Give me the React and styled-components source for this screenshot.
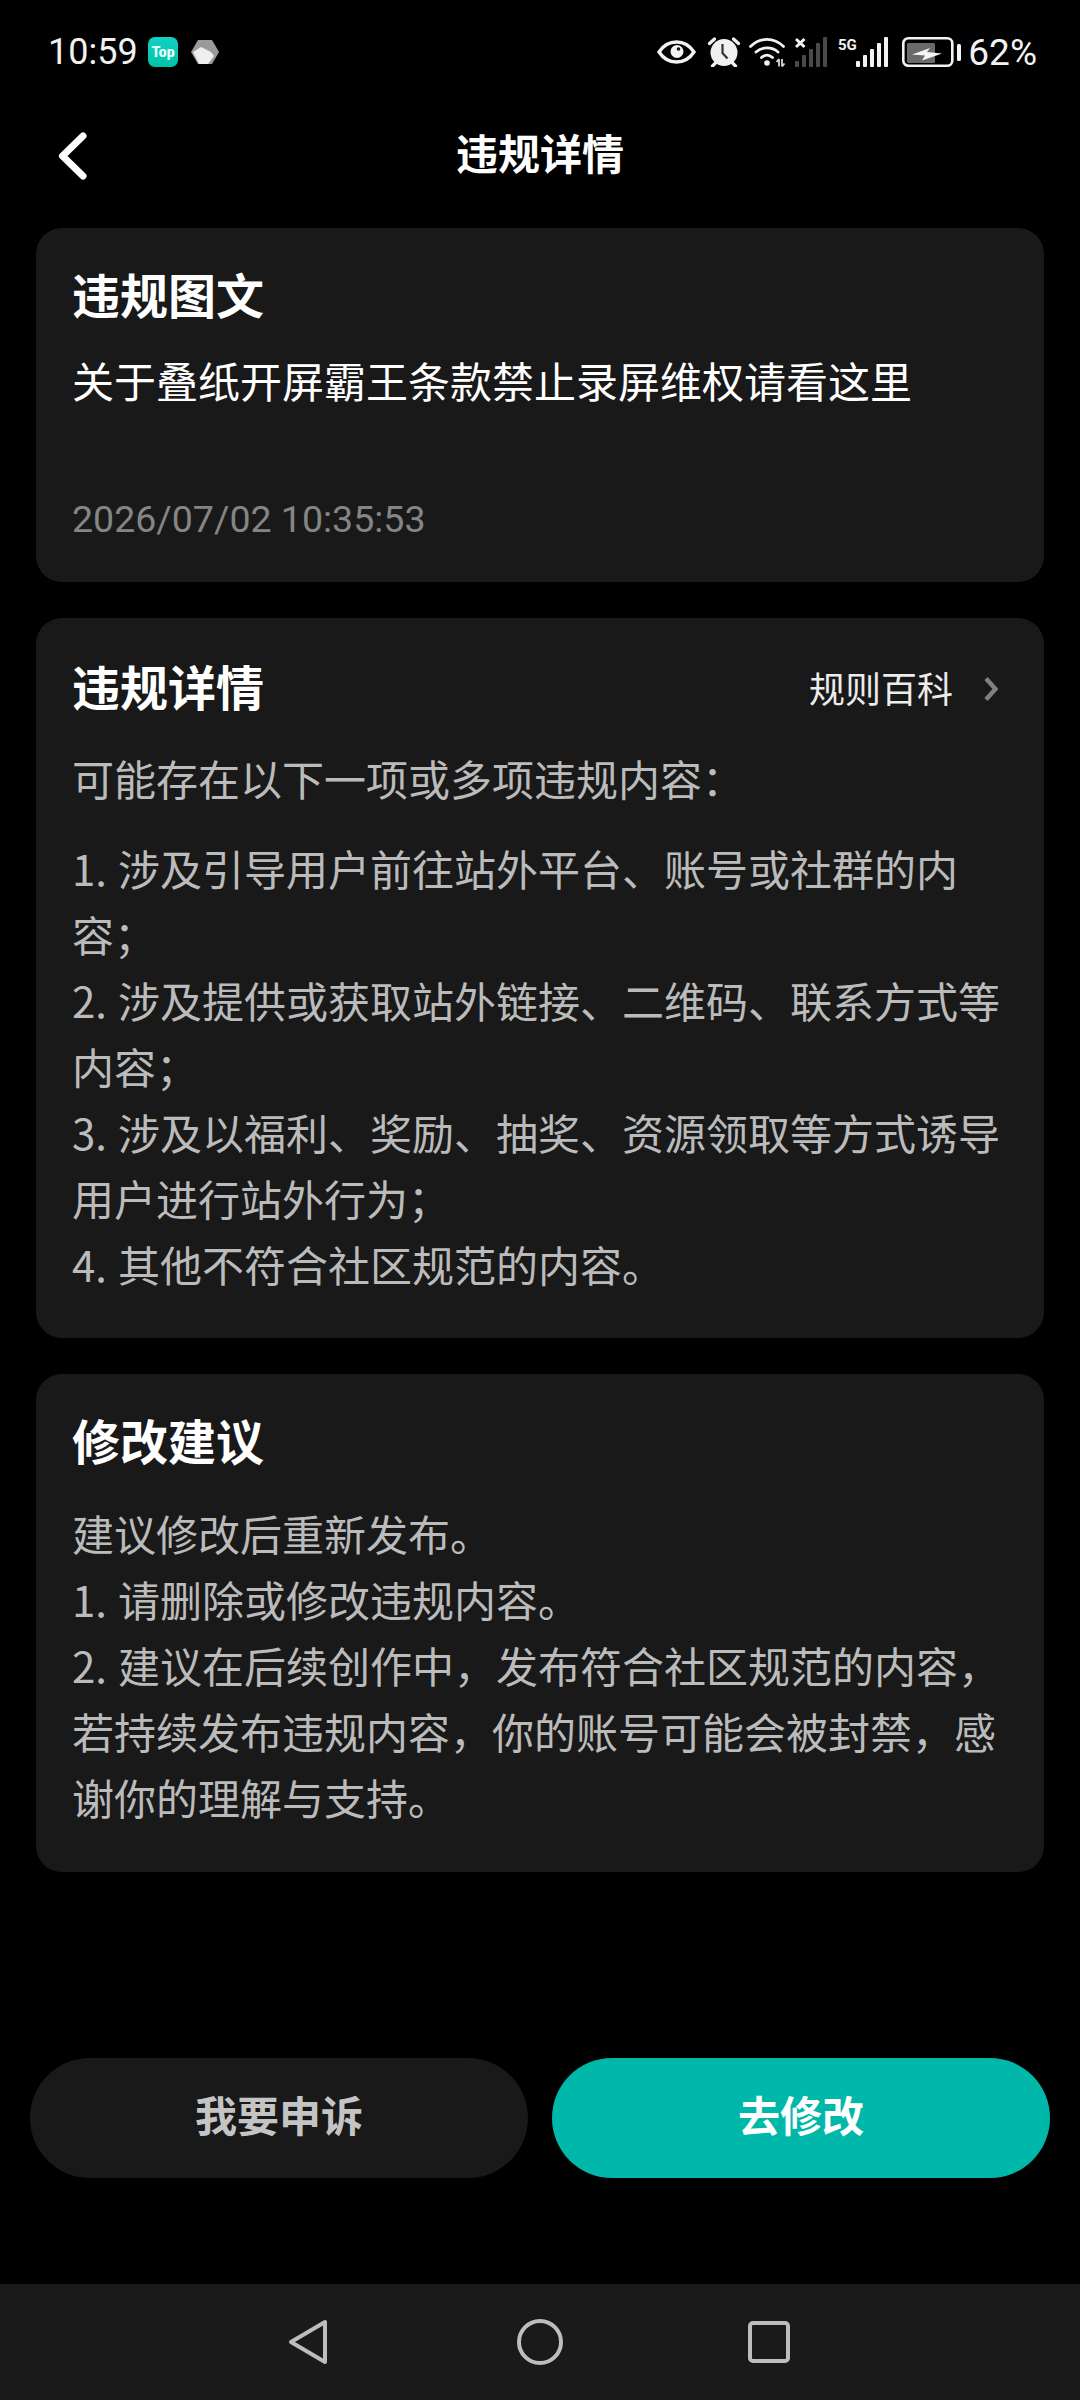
import React from "react";
import styled, { createGlobalStyle } from "styled-components";

const Global = createGlobalStyle`
  html, body { margin: 0; padding: 0; background: #000; }
  * { box-sizing: border-box; }
`;
const FONT = `"Noto Sans CJK SC", "Noto Sans", sans-serif`;

const Page = styled.div`
  width: 1080px; height: 2400px; background: #000; display: flex; flex-direction: column;
  font-family: ${FONT}; color: #fff;
`;
const StatusBar = styled.div`
  height: 104px; flex: none; padding: 0 43px 0 48px; display: flex; align-items: center; justify-content: space-between;
`;
const StatusGroup = styled.div`
  display: flex; align-items: center;
`;
const Clock = styled.span`
  font: 400 36px/1 Roboto, sans-serif; color: #f2f2f2; margin-right: 10px;
`;
const Percent = styled.span`
  font: 400 37px/1 Roboto, sans-serif; color: #f2f2f2; margin-left: 7px;
`;
const Icon = styled.svg`
  display: block; flex: none; margin-right: ${p => p.$mr || 0}px; margin-top: ${p => p.$mt || 0}px;
`;
const NavHeader = styled.div`
  height: 104px; margin-bottom: 20px; flex: none; display: grid; grid-template-columns: 1fr auto 1fr; align-items: center;
`;
const BackButton = styled.div`
  padding-left: 58px; display: flex;
`;
const HeaderTitle = styled.div`
  font-size: 42px; font-weight: 700; line-height: 60px; margin-bottom: 9px;
`;
const Cards = styled.div`
  display: flex; flex-direction: column; gap: 36px; padding: 0 36px;
`;
const Card = styled.section`
  background: #191919; border-radius: 26px; padding: 33px 36px 0; height: ${p => p.$h}px;
`;
const CardHead = styled.div`
  display: flex; align-items: center; justify-content: space-between; height: 66px; padding-top: 2px;
`;
const CardTitle = styled.h2`
  margin: 0; font-size: 48px; font-weight: 700; line-height: 64px; color: #fff;
`;
const RuleLink = styled.div`
  display: flex; align-items: center; gap: 31px; font-size: 36px; color: #ececec; padding: 4px 10px 0 0;
`;
const Headline = styled.p`
  margin: 22px 0 0; font-size: 42px; line-height: 66px; color: #fff;
`;
const Stamp = styled.div`
  margin-top: 84px; font: 400 37.5px/44px Roboto, sans-serif; color: #858585;
`;
const Body = styled.p`
  margin: ${p => p.$top}px 0 0; font-size: 42px; line-height: 66px; color: #bbb; word-spacing: 1.5px;
`;
const Spacer = styled.div`flex: 1;`;
const Actions = styled.div`
  display: flex; gap: 24px; padding: 0 30px; margin-bottom: 106px;
`;
const Action = styled.button`
  flex: 1; height: 120px; border: 0; padding: 0 0 10px; border-radius: 60px; font-family: ${FONT}; font-size: 42px; font-weight: 700;
  background: ${p => (p.$primary ? "#00b8a9" : "#191919")};
  color: ${p => (p.$primary ? "#fff" : "#c4c4c4")};
`;
const SystemBar = styled.div`
  height: 116px; flex: none; background: #1a1a1a; display: flex; align-items: center; padding-left: 288px;
`;

const TopBadge = () => (
  <Icon $mr={13} width="30" height="30" viewBox="0 0 30 30">
    <defs>
      <linearGradient id="tg" x1="0" y1="0" x2="0" y2="1">
        <stop offset="0" stopColor="#12d0c4" />
        <stop offset="1" stopColor="#00c4a8" />
      </linearGradient>
    </defs>
    <rect width="30" height="30" rx="7" fill="url(#tg)" />
    <text x="15" y="20" textAnchor="middle" fontFamily="Roboto" fontWeight="900" fontSize="14" fill="#e6fffb">Top</text>
  </Icon>
);
const HexBadge = () => (
  <Icon width="28" height="24" viewBox="0 0 28 24">
    <path d="M7 0h14l7 12-7 12H7L0 12z" fill="#9a9a9a" />
    <path d="M2 12l8-5 10 5 3 4-6 8H8z" fill="#eeeeee" />
  </Icon>
);
const Eye = () => (
  <Icon $mr={12} width="39" height="24" viewBox="0 0 39 24">
    <path d="M2 12C7 4.5 12.5 2 19.5 2S32 4.5 37 12c-5 7.5-10.5 10-17.5 10S7 19.5 2 12z" fill="none" stroke="#f2f2f2" strokeWidth="3.4" />
    <circle cx="20" cy="11.5" r="6.5" fill="#f2f2f2" />
    <circle cx="21.5" cy="9" r="1.8" fill="#111" />
  </Icon>
);
const Alarm = () => (
  <Icon $mr={9} width="32" height="30" viewBox="0 0 32 30">
    <circle cx="16" cy="15.5" r="13.5" fill="#f0f0f0" />
    <path d="M1.5 6.5L6.5 2M30.5 6.5L25.5 2M4.5 29l4-4M27.5 29l-4-4" stroke="#f0f0f0" strokeWidth="3.2" strokeLinecap="round" />
    <path d="M14.5 7v9l5 5.5" fill="none" stroke="#333" strokeWidth="2.2" />
  </Icon>
);
const Wifi = () => (
  <Icon $mr={8} width="38" height="30" viewBox="0 0 38 30">
    <path d="M1.5 9.5C11 0 25 0 34.5 9.5" fill="none" stroke="#f2f2f2" strokeWidth="2.8" strokeLinecap="round" />
    <path d="M7 15C13 9.5 23 9.5 29 15" fill="none" stroke="#f2f2f2" strokeWidth="2.8" strokeLinecap="round" />
    <path d="M12.5 20.5c3.5-3 7.5-3 11 0" fill="none" stroke="#f2f2f2" strokeWidth="2.8" strokeLinecap="round" />
    <circle cx="18" cy="26" r="2.8" fill="#f2f2f2" />
    <path d="M30 22v7.5M33 29.5V22M30 22l-2.5 3M33 29.5l2.5-3" stroke="#d8d8d8" strokeWidth="1.8" fill="none" />
  </Icon>
);
const simBars = [[0, 6], [7, 12], [14, 18], [21, 24], [28, 30]];
const SimOff = () => (
  <Icon $mr={11} width="32" height="30" viewBox="0 0 32 30">
    {simBars.map(([x, h]) => (
      <rect key={x} x={x} y={30 - h} width="4" height={h} rx="1" fill="#4a4a4a" />
    ))}
    <path d="M1 2l8.5 8M9.5 2L1 10" stroke="#f2f2f2" strokeWidth="3" />
  </Icon>
);
const Sim5G = () => (
  <Icon $mr={14} width="50" height="30" viewBox="0 0 50 30">
    <text x="0" y="13" fontFamily="Roboto" fontWeight="700" fontSize="15" fill="#f2f2f2">5G</text>
    {simBars.map(([x, h]) => (
      <rect key={x} x={x + 18} y={30 - h} width="4" height={h} rx="1" fill="#f2f2f2" />
    ))}
  </Icon>
);
const Battery = () => (
  <Icon width="59" height="30" viewBox="0 0 59 30">
    <rect x="1.3" y="1.3" width="49" height="27.4" rx="5" fill="none" stroke="#f2f2f2" strokeWidth="2.6" />
    <rect x="5" y="6" width="28" height="20" rx="1.5" fill="#6a6a6a" />
    <path d="M10 17.5L28 11l-3 4 15 1.5-20 7 3-5z" fill="#f4f4f4" />
    <rect x="55" y="7" width="4" height="17" rx="1.5" fill="#f2f2f2" />
  </Icon>
);

const Chevron = () => (
  <Icon width="30" height="48" viewBox="0 0 30 48">
    <path d="M25 4L4.5 24 25 44" fill="none" stroke="#fff" strokeWidth="7" strokeLinecap="round" strokeLinejoin="round" />
  </Icon>
);
const SmallChevron = () => (
  <Icon $mt={4} width="14" height="26" viewBox="0 0 14 26">
    <path d="M2 2.5L11.5 13 2 23.5" fill="none" stroke="#808080" strokeWidth="4.5" />
  </Icon>
);

const NavBack = () => (
  <Icon $mr={189} width="40" height="46" viewBox="0 0 40 46">
    <polygon points="37,3 37,43 3,23" fill="none" stroke="#bdbdbd" strokeWidth="4" strokeLinejoin="round" />
  </Icon>
);
const NavHome = () => (
  <Icon $mr={185} width="46" height="46" viewBox="0 0 46 46">
    <circle cx="23" cy="23" r="21" fill="none" stroke="#bdbdbd" strokeWidth="4" />
  </Icon>
);
const NavRecent = () => (
  <Icon width="42" height="42" viewBox="0 0 42 42">
    <rect x="2" y="2" width="38" height="38" rx="3" fill="none" stroke="#bdbdbd" strokeWidth="4" />
  </Icon>
);

export default function App() {
  return (
    <Page>
      <Global />
      <StatusBar>
        <StatusGroup>
          <Clock>10:59</Clock>
          <TopBadge />
          <HexBadge />
        </StatusGroup>
        <StatusGroup>
          <Eye />
          <Alarm />
          <Wifi />
          <SimOff />
          <Sim5G />
          <Battery />
          <Percent>62%</Percent>
        </StatusGroup>
      </StatusBar>
      <NavHeader>
        <BackButton><Chevron /></BackButton>
        <HeaderTitle>违规详情</HeaderTitle>
      </NavHeader>
      <Cards>
        <Card $h={354}>
          <CardTitle>违规图文</CardTitle>
          <Headline>关于叠纸开屏霸王条款禁止录屏维权请看这里</Headline>
          <Stamp>2026/07/02 10:35:53</Stamp>
        </Card>
        <Card $h={720}>
          <CardHead>
            <CardTitle>违规详情</CardTitle>
            <RuleLink>规则百科<SmallChevron /></RuleLink>
          </CardHead>
          <Body $top={28}>可能存在以下一项或多项违规内容：</Body>
          <Body $top={24}>
            1. 涉及引导用户前往站外平台、账号或社群的内容；<br />
            2. 涉及提供或获取站外链接、二维码、联系方式等内容；<br />
            3. 涉及以福利、奖励、抽奖、资源领取等方式诱导用户进行站外行为；<br />
            4. 其他不符合社区规范的内容。
          </Body>
        </Card>
        <Card $h={498}>
          <CardTitle>修改建议</CardTitle>
          <Body $top={29}>
            建议修改后重新发布。<br />
            1. 请删除或修改违规内容。<br />
            2. 建议在后续创作中，发布符合社区规范的内容，若持续发布违规内容，你的账号可能会被封禁，感谢你的理解与支持。
          </Body>
        </Card>
      </Cards>
      <Spacer />
      <Actions>
        <Action>我要申诉</Action>
        <Action $primary>去修改</Action>
      </Actions>
      <SystemBar>
        <NavBack />
        <NavHome />
        <NavRecent />
      </SystemBar>
    </Page>
  );
}
